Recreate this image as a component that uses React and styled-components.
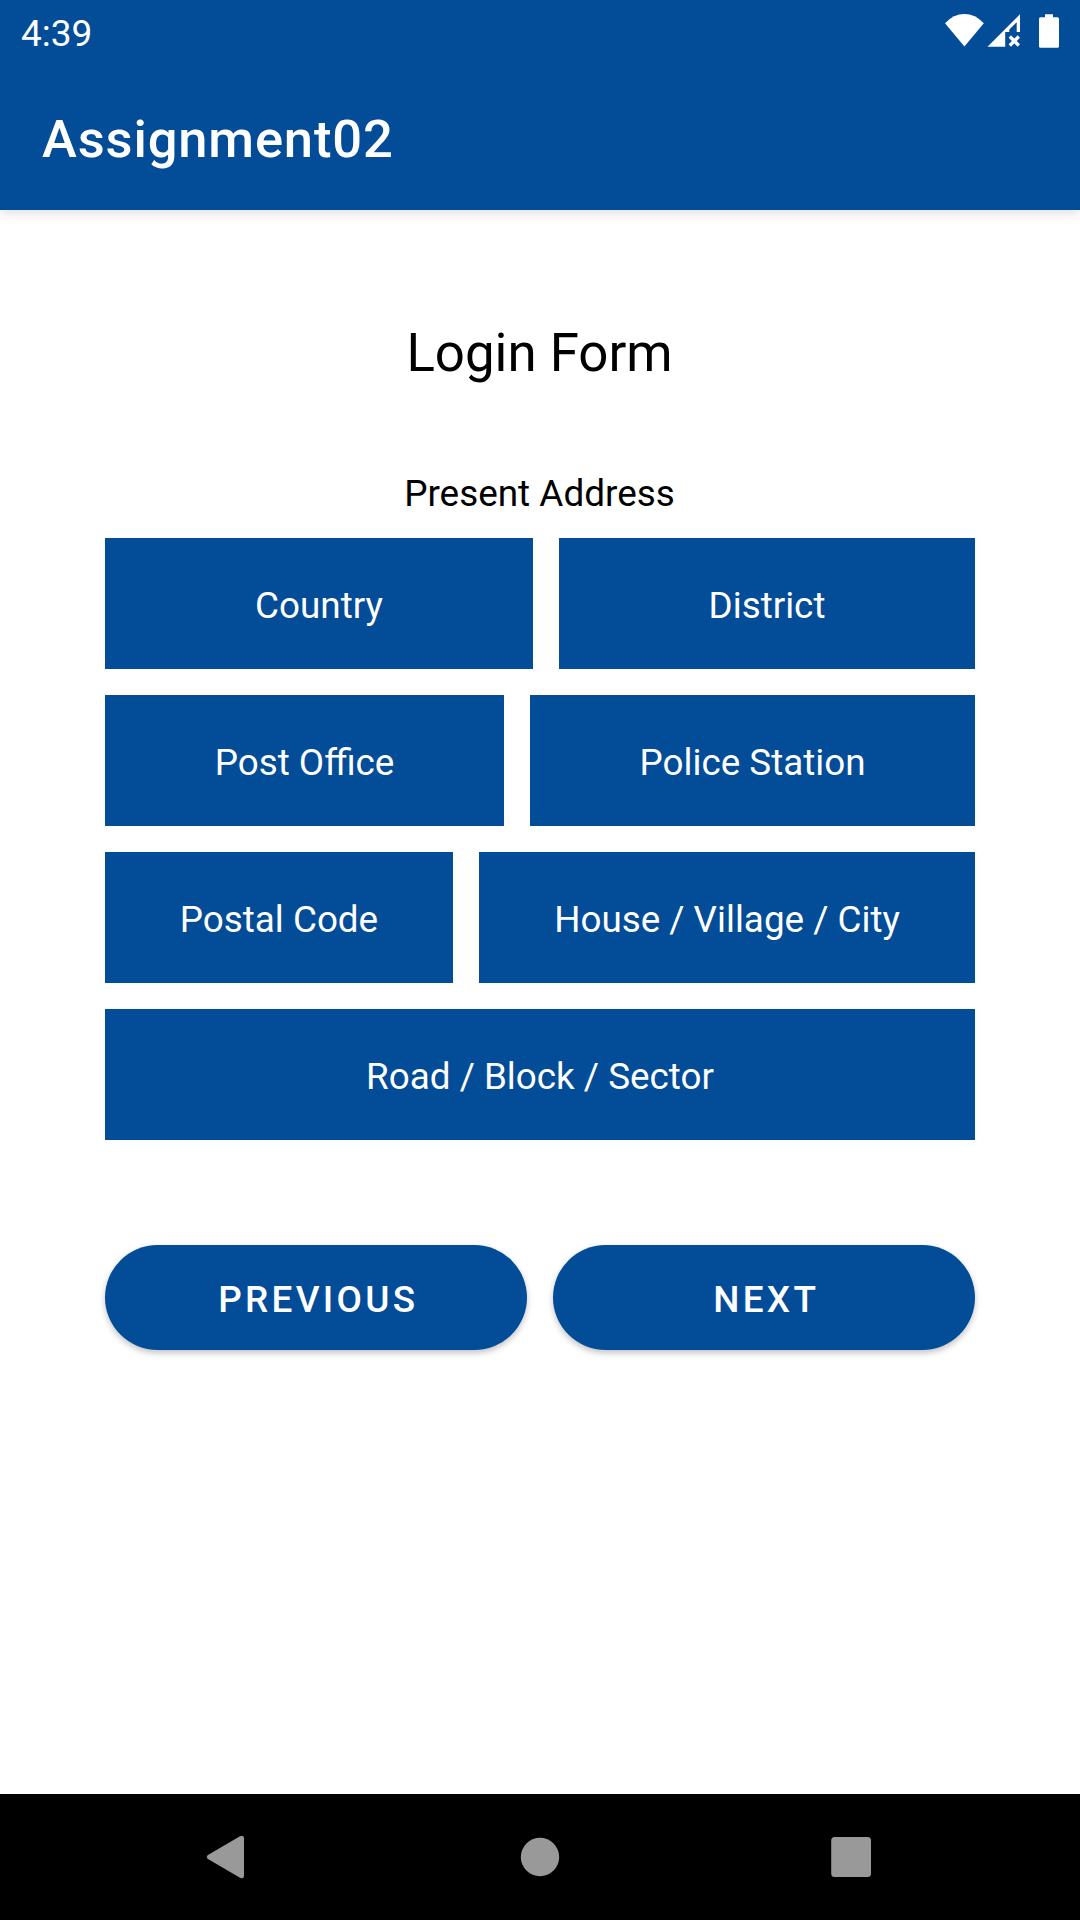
import React from "react";
import styled, { createGlobalStyle } from "styled-components";

const BLUE = "#024c98";

const GlobalStyle = createGlobalStyle`
  *, *::before, *::after { box-sizing: border-box; }
  body { margin: 0; background: #fff; font-family: Roboto, sans-serif; }
`;

const Screen = styled.div`
  width: 1080px;
  height: 1920px;
  display: flex;
  flex-direction: column;
  background: #fff;
  overflow: hidden;
`;

const Header = styled.header`
  flex: none;
  height: 210px;
  background: ${BLUE};
  color: #fff;
  box-shadow: 0 3px 12px rgba(0, 0, 0, 0.13);
`;

const StatusBar = styled.div`
  height: 63px;
  display: flex;
  align-items: flex-start;
  justify-content: space-between;
  padding-left: 21px;
`;

const Clock = styled.span`
  font-size: 37px;
  line-height: 43px;
  padding-top: 12px;
`;

const AppBar = styled.div`
  height: 147px;
  padding: 0 42px;
  display: flex;
  align-items: center;
`;

const AppTitle = styled.h1`
  margin: 0;
  padding-top: 5px;
  font-size: 52.5px;
  line-height: 62px;
  font-weight: 500;
  letter-spacing: 0.85px;
`;

const Main = styled.main`
  flex: 1;
  display: flex;
  flex-direction: column;
  padding: 111px 105px 0;
`;

const FormTitle = styled.h2`
  margin: 0;
  padding-right: 1px;
  font-size: 52.8px;
  line-height: 64px;
  font-weight: 400;
  text-align: center;
  color: #000;
`;

const SectionLabel = styled.p`
  margin: 87px 0 0;
  padding-right: 1px;
  height: 66px;
  font-size: 36.9px;
  line-height: 44px;
  text-align: center;
  color: #000;
`;

const Fields = styled.div`
  display: flex;
  flex-direction: column;
  gap: 26px;
`;

const Row = styled.div`
  display: flex;
  gap: 26px;
`;

const Field = styled.div`
  flex: ${(p) => p.$weight} 1 0;
  height: 131px;
  padding-top: 5px;
  display: flex;
  align-items: center;
  justify-content: center;
  background: ${BLUE};
  color: #fff;
  font-size: 36.8px;
  line-height: 44px;
  white-space: nowrap;
`;

const Actions = styled(Row)`
  margin-top: 105px;
`;

const PillButton = styled.button`
  flex: 1 1 0;
  height: 105px;
  border: 0;
  border-radius: 53px;
  padding: 5px 0 0 4.5px;
  background: ${BLUE};
  color: #fff;
  font: 500 36.9px/44px Roboto, sans-serif;
  letter-spacing: 3.28px;
  text-transform: uppercase;
  box-shadow: 0 3px 6px rgba(0, 0, 0, 0.24);
`;

const NavBar = styled.nav`
  flex: none;
  height: 126px;
  background: #000;
  display: flex;
  align-items: center;
  justify-content: center;
  gap: 252px;
`;

const StatusIcons = () => (
  <svg width="140" height="60" viewBox="0 0 140 60" fill="#fff" aria-hidden="true">
    <path d="M5 23.2Q13.5 14 24.4 14Q35.3 14 43.8 23.2L24.4 46.6Z" />
    <path d="M47.5 46.8L80 14.3V32H76.7V22.2L69.3 29.6V32H65.2V46.8Z" />
    <path d="M69.8 36.5L78.8 45.5M78.8 36.5L69.8 45.5" stroke="#fff" strokeWidth="3.3" />
    <path d="M105 14.3H113V17.3H117.5Q119 17.3 119 18.8V46.3Q119 47.8 117.5 47.8H100.5Q99 47.8 99 46.3V18.8Q99 17.3 100.5 17.3H105Z" />
  </svg>
);

const NavIcon = ({ children }) => (
  <svg width="60" height="60" viewBox="0 0 60 60" fill="#999" aria-hidden="true">
    {children}
  </svg>
);

const rows = [
  [["Country", 428], ["District", 416]],
  [["Post Office", 399], ["Police Station", 445]],
  [["Postal Code", 348], ["House / Village / City", 496]],
  [["Road / Block / Sector", 870]],
];

export default function App() {
  return (
    <Screen>
      <GlobalStyle />
      <Header>
        <StatusBar>
          <Clock>4:39</Clock>
          <StatusIcons />
        </StatusBar>
        <AppBar>
          <AppTitle>Assignment02</AppTitle>
        </AppBar>
      </Header>
      <Main>
        <FormTitle>Login Form</FormTitle>
        <SectionLabel>Present Address</SectionLabel>
        <Fields>
          {rows.map((row) => (
            <Row key={row[0][0]}>
              {row.map(([label, weight]) => (
                <Field key={label} $weight={weight}>{label}</Field>
              ))}
            </Row>
          ))}
        </Fields>
        <Actions>
          <PillButton>Previous</PillButton>
          <PillButton>Next</PillButton>
        </Actions>
      </Main>
      <NavBar>
        <NavIcon>
          <path d="M9.5 28.3L42 9.3Q46 7.6 46 11.3V48.7Q46 52.4 42 50.7L9.5 31.7Q8 30 9.5 28.3Z" />
        </NavIcon>
        <NavIcon>
          <circle cx="30" cy="30" r="19.2" />
        </NavIcon>
        <NavIcon>
          <rect x="9.2" y="10.1" width="39.8" height="39.8" rx="3.5" />
        </NavIcon>
      </NavBar>
    </Screen>
  );
}
